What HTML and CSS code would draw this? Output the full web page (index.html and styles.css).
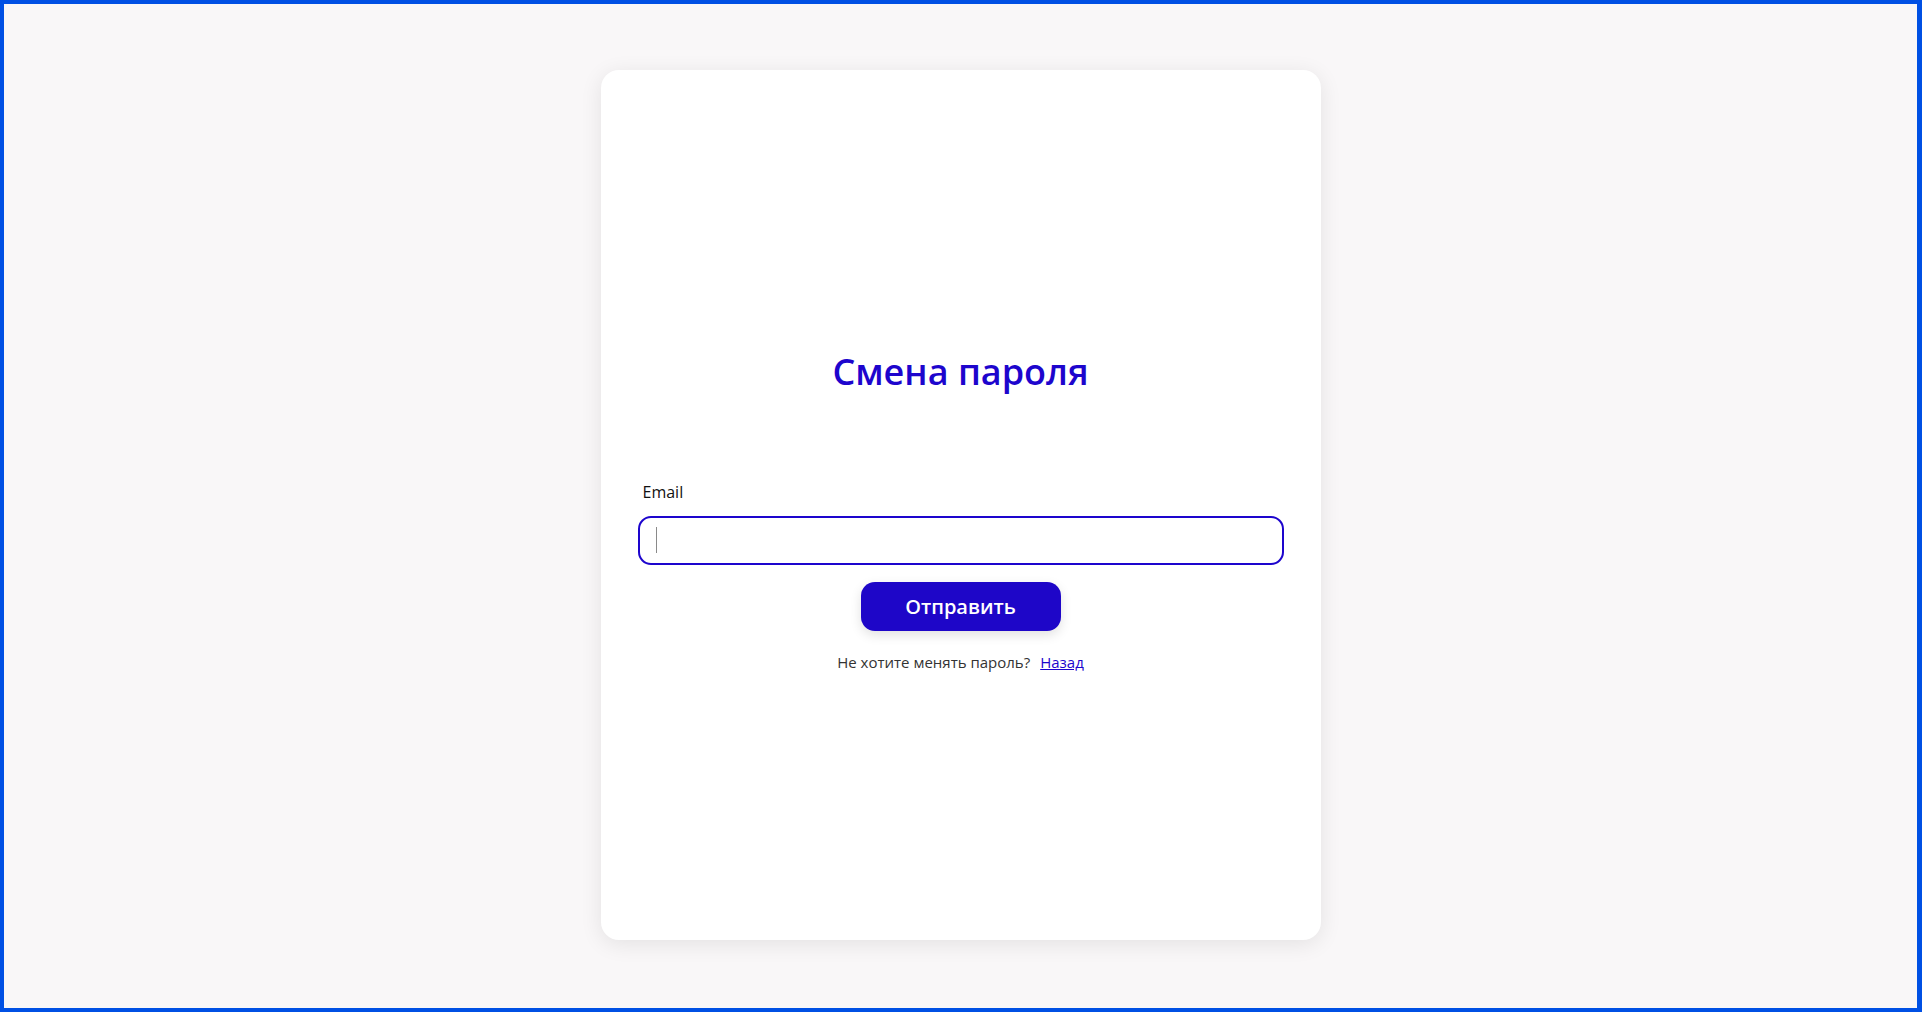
FILE: index.html
```html
<!DOCTYPE html>
<html lang="ru">
<head>
<meta charset="utf-8">
<title>Смена пароля</title>
<link rel="stylesheet" href="styles.css">
</head>
<body>
<div class="frame">
  <main class="card">
    <h1 class="title">Смена пароля</h1>
    <form class="form">
      <label class="label" for="email">Email</label>
      <div class="field">
        <input class="input" id="email" type="email">
        <span class="caret"></span>
      </div>
      <button class="btn" type="button">Отправить</button>
      <p class="hint">Не хотите менять пароль?<a class="link" href="#">Назад</a></p>
    </form>
  </main>
</div>
</body>
</html>
```
FILE: styles.css
```css
* { box-sizing: border-box; }
html, body { margin: 0; padding: 0; }
body {
  font-family: "Open Sans", "Noto Sans", sans-serif;
  background: #f9f7f8;
}
.frame {
  width: 1922px;
  height: 1012px;
  border: 4px solid #0050e4;
  border-right-width: 5px;
  background: #f9f7f8;
  display: flex;
  align-items: flex-start;
  justify-content: center;
  padding-top: 66px;
}
.card {
  width: 720px;
  height: 870px;
  background: #fff;
  border-radius: 18px;
  box-shadow: 0 4px 22px rgba(0, 0, 0, 0.09);
  padding: 278px 37px 0;
  display: flex;
  flex-direction: column;
}
.title {
  margin: 0;
  text-align: center;
  font-size: 36px;
  line-height: 48px;
  font-weight: 600;
  color: #1d05cd;
}
.form {
  margin-top: 85px;
  display: flex;
  flex-direction: column;
}
.label {
  font-size: 16px;
  line-height: 22px;
  color: #111;
  padding-left: 5px;
}
.field {
  position: relative;
  margin-top: 13px;
}
.input {
  display: block;
  width: 100%;
  height: 49px;
  border: 2px solid #1d05cd;
  border-radius: 13px;
  outline: none;
  padding: 0 15px;
  font-size: 16px;
  font-family: inherit;
  background: #fff;
}
.caret {
  position: absolute;
  left: 18px;
  top: 11px;
  width: 1px;
  height: 26px;
  background: #8a8a8a;
}
.btn {
  align-self: center;
  margin-top: 17px;
  width: 200px;
  height: 49px;
  border: none;
  border-radius: 14px;
  background: #1e06c8;
  color: #fff;
  font-family: inherit;
  font-size: 20px;
  font-weight: 600;
  box-shadow: 0 4px 12px rgba(0, 0, 0, 0.12);
}
.hint {
  margin: 21px 0 0;
  text-align: center;
  font-size: 15px;
  line-height: 20px;
  color: #333;
}
.link {
  margin-left: 10px;
  color: #1d05cd;
  text-decoration: underline;
}
```
